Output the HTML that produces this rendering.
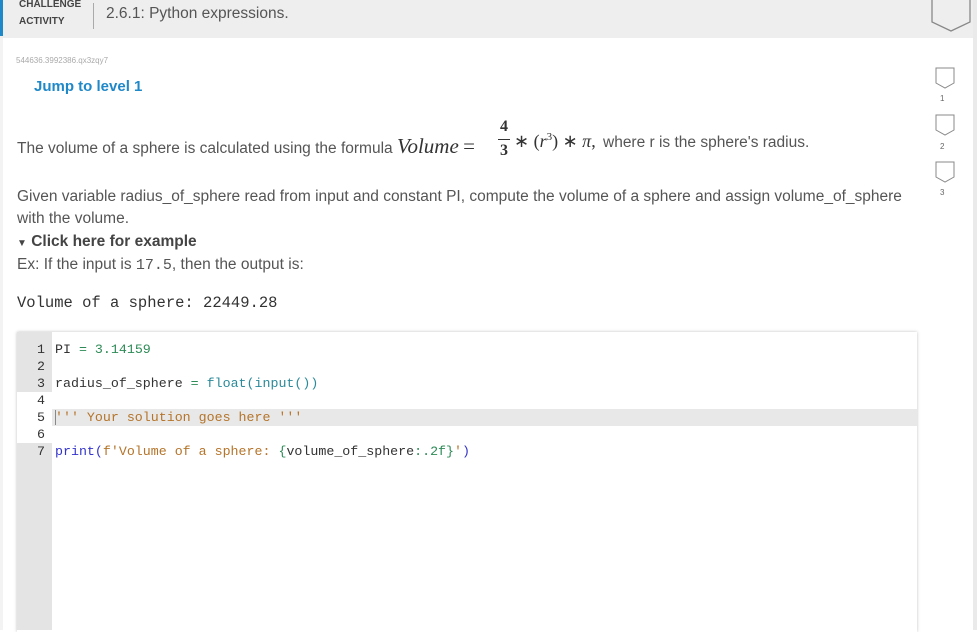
<!DOCTYPE html>
<html><head><meta charset="utf-8"><style>
body{margin:0;width:977px;height:630px;overflow:hidden;background:#fff;font-family:"Liberation Sans",sans-serif;color:#555;position:relative}
.a{position:absolute;white-space:nowrap}
.hdr{position:absolute;left:0;top:0;width:973px;height:38px;background:#eeeeee}
.mono{font-family:"Liberation Mono",monospace}
.code{font-family:"Liberation Mono",monospace;font-size:13.3px;color:#333}
.ln{position:absolute;left:17px;width:28px;text-align:right;font-family:"Liberation Mono",monospace;font-size:13.3px;color:#333}
.g{color:#2e8b57}.t{color:#2a8a9a}.s{color:#b5742a}.b{color:#3333cc}
</style></head><body>
<div style="position:absolute;left:0;top:38px;width:3px;height:592px;background:#f3f3f3"></div>
<div style="position:absolute;left:973px;top:0;width:4px;height:630px;background:#eaeaea"></div>
<div class="hdr"></div>
<div style="position:absolute;left:0;top:0;width:3px;height:36px;background:#1e88c9"></div>
<div class="a" style="left:19px;top:-4px;font-size:10px;font-weight:bold;color:#444;line-height:17px">CHALLENGE<br>ACTIVITY</div>
<div style="position:absolute;left:93px;top:3px;width:1px;height:26px;background:#aaa"></div>
<div class="a" style="left:106px;top:5px;font-size:15.5px;color:#555">2.6.1: Python expressions.</div>
<svg style="position:absolute;left:930px;top:0" width="44" height="34"><path d="M2 0V22L21 31L40 22V0" fill="none" stroke="#888" stroke-width="1.3"/></svg>
<svg style="position:absolute;left:934px;top:66px" width="24" height="130" fill="none" stroke="#888" stroke-width="1">
<path d="M2 2H20V17L11 22L2 17Z"/><path d="M2 49H20V64L11 69L2 64Z"/><path d="M2 96H20V111L11 116L2 111Z"/></svg>
<div class="a" style="left:940px;top:94px;font-size:8px;color:#666">1</div>
<div class="a" style="left:940px;top:142px;font-size:8px;color:#666">2</div>
<div class="a" style="left:940px;top:188px;font-size:8px;color:#666">3</div>
<div class="a" style="left:16px;top:56px;font-size:8px;color:#aaa">544636.3992386.qx3zqy7</div>
<div class="a" style="left:34px;top:78px;font-size:15px;font-weight:bold;color:#1e88c9">Jump to level 1</div>
<div class="a" style="left:17px;top:134px;font-size:15.5px">The volume of a sphere is calculated using the formula <span style="font-family:'Liberation Serif',serif;font-style:italic;font-size:21px;color:#333">Volume</span> <span style="font-family:'Liberation Serif',serif;font-size:21px;color:#333">=</span></div>
<div class="a" style="left:500px;top:118px;font-family:'Liberation Serif',serif;font-weight:bold;font-size:16px;color:#333">4</div>
<div style="position:absolute;left:498px;top:139px;width:12px;height:1px;background:#333"></div>
<div class="a" style="left:500px;top:142px;font-family:'Liberation Serif',serif;font-weight:bold;font-size:16px;color:#333">3</div>
<div class="a" style="left:514px;top:131px;font-family:'Liberation Serif',serif;font-size:18px;color:#333">∗ (<i>r</i><sup style="font-size:11px">3</sup>) ∗ <i>π</i>,</div>
<div class="a" style="left:603px;top:134px;font-size:15.5px">where r is the sphere's radius.</div>
<div class="a" style="left:17px;top:188px;font-size:15.5px">Given variable radius_of_sphere read from input and constant PI, compute the volume of a sphere and assign volume_of_sphere</div>
<div class="a" style="left:17px;top:210px;font-size:15.5px">with the volume.</div>
<div class="a" style="left:17px;top:233px;font-size:15.5px;font-weight:bold;color:#444"><span style="font-size:10px">▼</span> Click here for example</div>
<div class="a" style="left:17px;top:256px;font-size:15.5px">Ex: If the input is <span class="mono" style="font-size:15px">17.5</span>, then the output is:</div>
<div class="a mono" style="left:17px;top:294px;font-size:15.5px;color:#333">Volume of a sphere: 22449.28</div>
<div style="position:absolute;left:17px;top:332px;width:900px;height:300px;background:#fff;box-shadow:0 0 3px rgba(0,0,0,.25)"></div>
<div style="position:absolute;left:17px;top:332px;width:35px;height:298px;background:#e4e4e4"></div>
<div style="position:absolute;left:17px;top:392px;width:35px;height:51px;background:#fff"></div>
<div style="position:absolute;left:52px;top:409px;width:865px;height:17px;background:#e8e8e8"></div>
<div style="position:absolute;left:55px;top:410px;width:1px;height:15px;background:#888"></div>
<div class="ln" style="top:342px">1</div><div class="ln" style="top:359px">2</div><div class="ln" style="top:376px">3</div><div class="ln" style="top:393px">4</div><div class="ln" style="top:410px">5</div><div class="ln" style="top:427px">6</div><div class="ln" style="top:444px">7</div>
<div class="a code" style="left:55px;top:342px">PI <span class="g">=</span> <span class="g">3.14159</span></div>
<div class="a code" style="left:55px;top:376px">radius_of_sphere <span class="g">=</span> <span class="t">float(input())</span></div>
<div class="a code s" style="left:55px;top:410px">''' Your solution goes here '''</div>
<div class="a code" style="left:55px;top:444px"><span class="b">print(</span><span class="s">f'Volume of a sphere: </span><span class="g">{</span>volume_of_sphere<span class="g">:.2f}</span><span class="s">'</span><span class="b">)</span></div>
</body></html>
